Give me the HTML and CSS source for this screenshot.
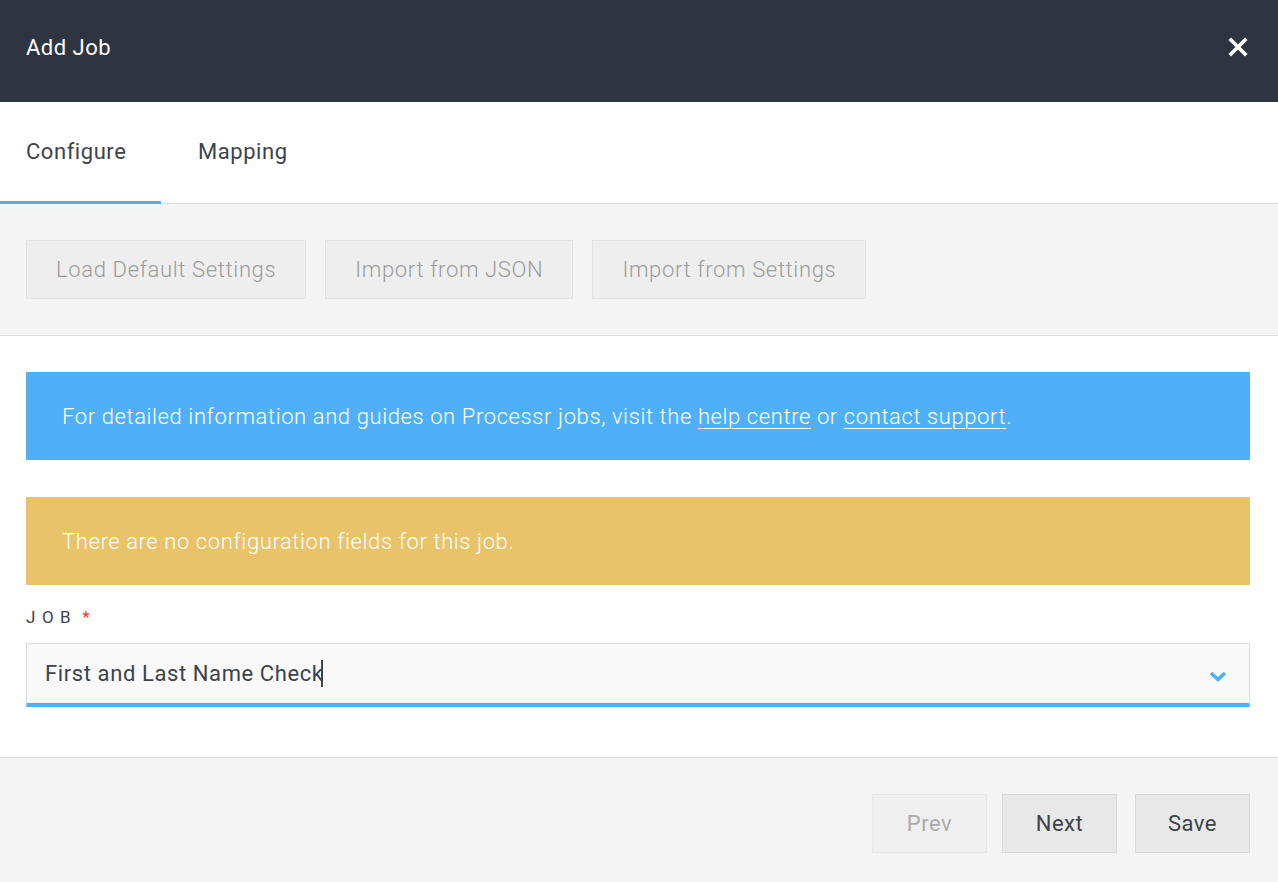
FILE: index.html
```html
<!DOCTYPE html>
<html lang="en">
<head>
    <meta charset="UTF-8">
    <meta name="viewport" content="width=device-width, initial-scale=1.0">
    <title>Add Job</title>
    <link rel="stylesheet" href="styles.css">
</head>
<body>
    <div class="modal">
        <header class="modal-header">
            <h1>Add Job</h1>
            <button class="close-btn" aria-label="Close">
                <svg width="20" height="20" viewBox="0 0 20 20">
                    <path d="M3 3 L17 17 M17 3 L3 17" stroke="#fff" stroke-width="3.6" stroke-linecap="square"/>
                </svg>
            </button>
        </header>

        <nav class="tabs">
            <a class="tab active">Configure</a>
            <a class="tab">Mapping</a>
        </nav>

        <div class="toolbar">
            <button class="tool-btn">Load Default Settings</button>
            <button class="tool-btn">Import from JSON</button>
            <button class="tool-btn">Import from Settings</button>
        </div>

        <div class="content">
            <div class="alert info">
                <p>For detailed information and guides on Processr jobs, visit the <a href="#">help centre</a> or <a href="#">contact support</a>.</p>
            </div>

            <div class="alert warning">
                <p>There are no configuration fields for this job.</p>
            </div>

            <div class="field">
                <label for="job"><span class="label-text">JOB</span><span class="required">*</span></label>
                <div class="select">
                    <span class="select-value">First and Last Name Check<span class="caret"></span></span>
                    <svg class="chevron" width="18" height="12" viewBox="0 0 18 12">
                        <path d="M2 3 L9 9.5 L16 3" fill="none" stroke="#4fb0f5" stroke-width="3.6"/>
                    </svg>
                </div>
            </div>
        </div>

        <footer class="modal-footer">
            <button class="foot-btn disabled">Prev</button>
            <button class="foot-btn">Next</button>
            <button class="foot-btn save">Save</button>
        </footer>
    </div>
</body>
</html>
```

FILE: styles.css
```css
* {
    margin: 0;
    padding: 0;
    box-sizing: border-box;
    font-family: Roboto, 'Liberation Sans', sans-serif;
}

body {
    background-color: #ffffff;
    width: 1278px;
    height: 882px;
    overflow: hidden;
}

.modal {
    display: flex;
    flex-direction: column;
    height: 882px;
}

.modal-header {
    background-color: #2f3540;
    height: 102px;
    display: flex;
    align-items: center;
    justify-content: space-between;
    padding: 0 26px;
}

.modal-header h1 {
    color: #ffffff;
    font-size: 22px;
    font-weight: 400;
    letter-spacing: 0.5px;
    margin-top: -8px;
}

.close-btn {
    background: none;
    border: none;
    width: 20px;
    height: 20px;
    margin-top: -8px;
    margin-right: 4px;
    cursor: pointer;
}

.tabs {
    display: flex;
    height: 102px;
    border-bottom: 1px solid #dcdcdc;
}

.tab {
    display: flex;
    align-items: center;
    padding: 0 36px 0 26px;
    font-size: 22px;
    font-weight: 400;
    letter-spacing: 0.55px;
    color: #3e424a;
    border-bottom: 3px solid transparent;
    margin-bottom: -1px;
}

.tab.active {
    border-bottom-color: #4fb0f5;
    width: 161px;
}

.tab + .tab {
    padding-left: 37px;
}

.toolbar {
    background-color: #f4f4f4;
    padding: 36px 26px;
    display: flex;
    gap: 19px;
    border-bottom: 1px solid #dcdcdc;
}

.tool-btn {
    background-color: #eeeeee;
    border: 1px solid #e3e3e3;
    color: #9c9c9c;
    height: 59px;
    padding: 0 29px;
    font-size: 22px;
    font-weight: 300;
    letter-spacing: 0.65px;
}

.content {
    padding: 36px 28px 50px 26px;
}

.alert {
    height: 88px;
    display: flex;
    align-items: center;
    padding: 0 36px;
    font-size: 22px;
    font-weight: 300;
    letter-spacing: 0.6px;
    color: #ffffff;
    margin-bottom: 37px;
}

.alert a {
    color: #ffffff;
    text-decoration: underline;
    text-underline-offset: 4px;
    text-decoration-thickness: 1px;
}

.info {
    background-color: #50b0f7;
}

.warning {
    background-color: #e8c36a;
    margin-bottom: 22px;
}

.field label {
    display: flex;
    align-items: baseline;
    font-size: 17px;
    font-weight: 400;
    color: #3e424a;
    margin-bottom: 16px;
}

.label-text {
    letter-spacing: 6.5px;
}

.required {
    color: #f0392b;
    margin-left: 5px;
}

.select {
    height: 64px;
    background-color: #f9f9f9;
    border: 1px solid #dcdcdc;
    border-bottom: 4px solid #4fb0f5;
    display: flex;
    align-items: center;
    justify-content: space-between;
    padding: 0 22px 0 18px;
}

.select-value {
    font-size: 22px;
    font-weight: 400;
    letter-spacing: 0.6px;
    color: #3e424a;
    display: flex;
    align-items: center;
}

.caret {
    display: inline-block;
    width: 2px;
    height: 27px;
    background-color: #3e424a;
    margin-left: -3px;
}

.chevron {
    margin-top: 4px;
}

.modal-footer {
    flex: 1;
    background-color: #f4f4f4;
    border-top: 1px solid #dcdcdc;
    display: flex;
    justify-content: flex-end;
    align-items: flex-start;
    padding: 36px 28px 0;
    gap: 15px;
}

.foot-btn {
    width: 115px;
    height: 59px;
    background-color: #e8e8e8;
    border: 1px solid #d9d9d9;
    color: #3e424a;
    font-size: 22px;
    font-weight: 400;
    letter-spacing: 0.5px;
}

.foot-btn.save {
    margin-left: 3px;
}

.foot-btn.disabled {
    background-color: #efefef;
    border-color: #e6e6e6;
    color: #ababab;
}
```
